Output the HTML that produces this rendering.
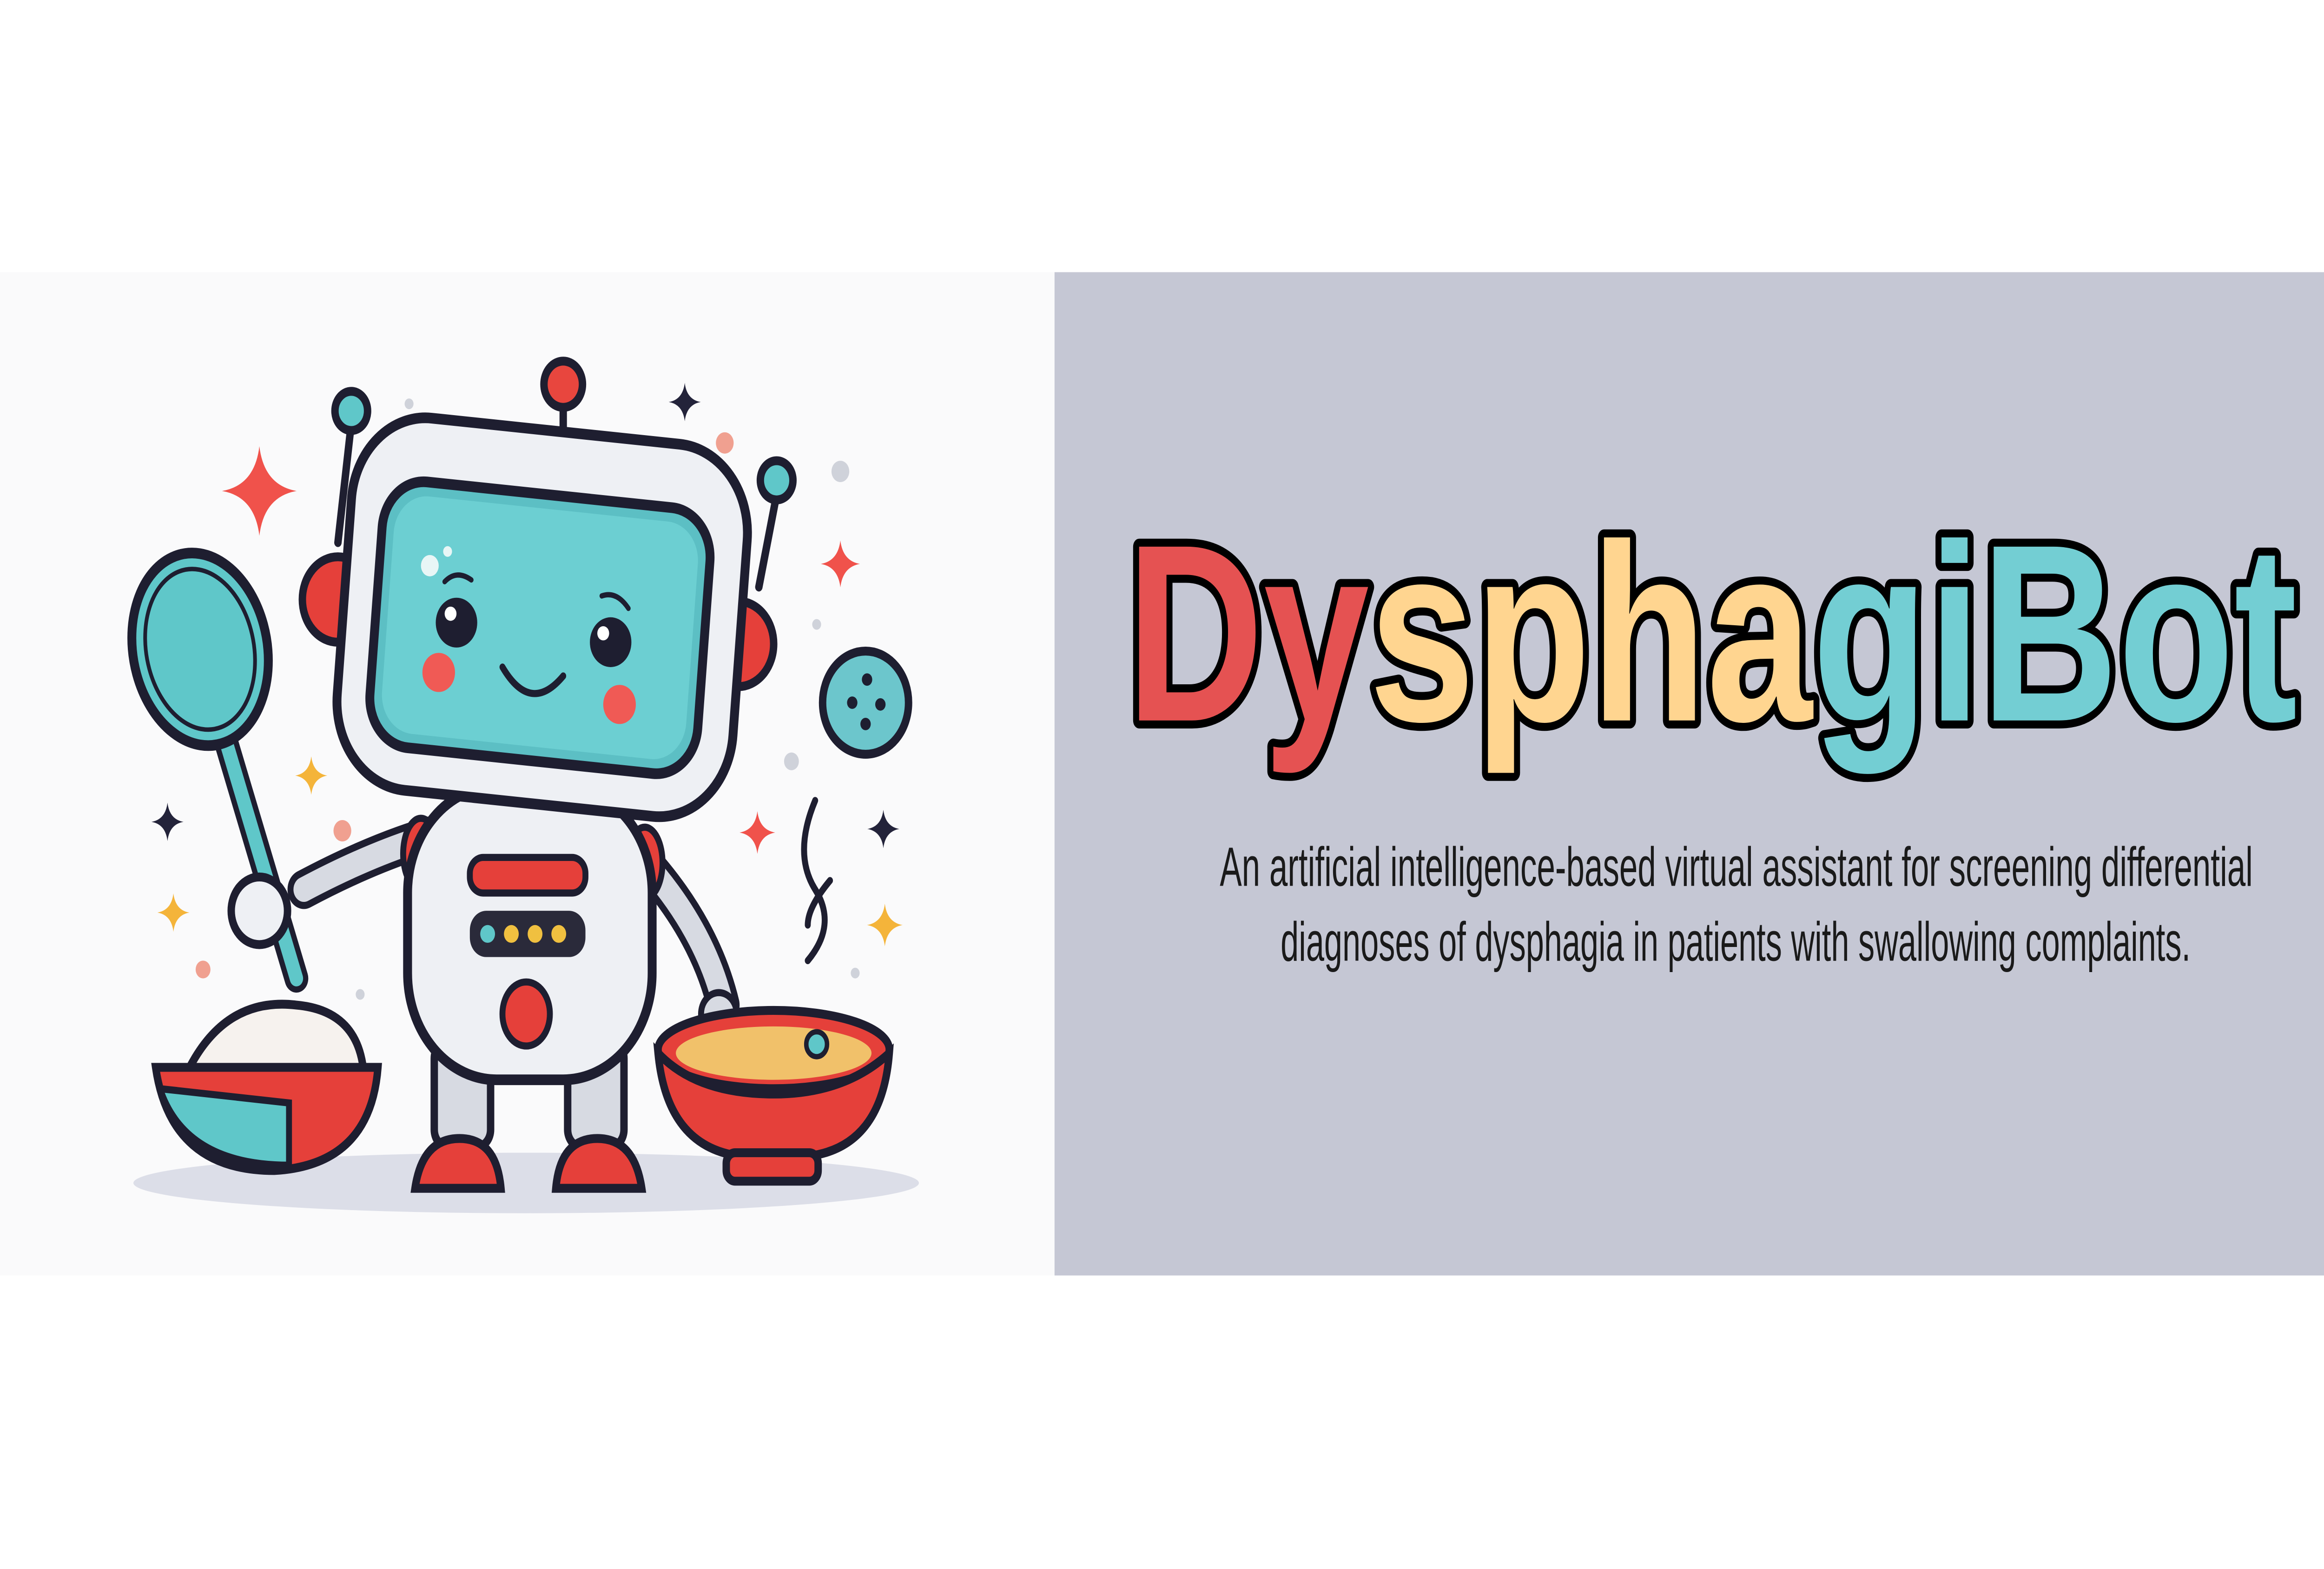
<!DOCTYPE html>
<html><head><meta charset="utf-8"><style>
html,body{margin:0;padding:0;background:#fff;overflow:hidden;}
svg{display:block;width:100vw;height:100vh;}
</style></head><body>
<svg viewBox="0 0 1568 882" preserveAspectRatio="none" xmlns="http://www.w3.org/2000/svg">
<defs>
<g id="spk"><path d="M0,-12 Q1.5,-1.5 12,0 Q1.5,1.5 0,12 Q-1.5,1.5 -12,0 Q-1.5,-1.5 0,-12Z"/></g>
</defs>
<rect width="1568" height="882" fill="#fff"/>
<rect x="0" y="153" width="711.5" height="564" fill="#fafafb"/>
<rect x="711.5" y="153" width="857" height="564" fill="#c5c7d4"/>

<ellipse cx="355" cy="665" rx="265" ry="17" fill="#dcdee8"/>

<g fill="#f0524b">
<use href="#spk" transform="translate(175,276) scale(2.1)"/>
<use href="#spk" transform="translate(567,317) scale(1.1)"/>
<use href="#spk" transform="translate(511,468) scale(1)"/>
</g>
<g fill="#f4b43a">
<use href="#spk" transform="translate(210,436) scale(0.9)"/>
<use href="#spk" transform="translate(117,513) scale(0.9)"/>
<use href="#spk" transform="translate(597,520) scale(1)"/>
</g>
<g fill="#23233a">
<use href="#spk" transform="translate(462,226) scale(0.9)"/>
<use href="#spk" transform="translate(113,462) scale(0.9)"/>
<use href="#spk" transform="translate(596,466) scale(0.9)"/>
</g>
<g fill="#f0a090"><circle cx="489" cy="249" r="6"/><circle cx="231" cy="467" r="6"/><circle cx="137" cy="545" r="5"/></g>
<g fill="#cfd2da"><circle cx="567" cy="265" r="6"/><circle cx="276" cy="227" r="3"/><circle cx="534" cy="428" r="5"/><circle cx="551" cy="351" r="3"/><circle cx="243" cy="559" r="3"/><circle cx="577" cy="547" r="3"/></g>
<circle cx="584" cy="395" r="29" fill="#6cc6cc" stroke="#1e1e30" stroke-width="5"/>
<g fill="#1e1e30"><circle cx="585" cy="382" r="3.5"/><circle cx="575" cy="395" r="3.5"/><circle cx="594" cy="396" r="3.5"/><circle cx="584" cy="407" r="3.5"/></g>
<path d="M550,450 Q535,480 550,500 Q565,520 545,540" fill="none" stroke="#1e1e30" stroke-width="4" stroke-linecap="round"/>
<path d="M560,495 Q545,510 545,520" fill="none" stroke="#1e1e30" stroke-width="4" stroke-linecap="round"/>

<g stroke="#1e1e30" stroke-width="5" stroke-linecap="round">
<line x1="228" y1="305" x2="237" y2="238"/>
<line x1="380" y1="245" x2="380" y2="225"/>
<line x1="512" y1="330" x2="524" y2="278"/>
</g>
<circle cx="237" cy="231" r="11" fill="#5fc7c9" stroke="#1e1e30" stroke-width="5"/>
<circle cx="380" cy="216" r="13" fill="#e8463e" stroke="#1e1e30" stroke-width="5"/>
<circle cx="524" cy="270" r="11" fill="#5fc7c9" stroke="#1e1e30" stroke-width="5"/>

<circle cx="228" cy="337" r="24" fill="#e5403a" stroke="#1e1e30" stroke-width="5"/>
<circle cx="498" cy="362" r="24" fill="#e5403a" stroke="#1e1e30" stroke-width="5"/>

<path d="M290,470 Q250,480 205,500" fill="none" stroke="#1e1e30" stroke-width="22" stroke-linecap="round"/>
<path d="M290,470 Q250,480 205,500" fill="none" stroke="#d7dae2" stroke-width="14" stroke-linecap="round"/>
<path d="M430,480 Q475,520 488,565" fill="none" stroke="#1e1e30" stroke-width="22" stroke-linecap="round"/>
<path d="M430,480 Q475,520 488,565" fill="none" stroke="#d7dae2" stroke-width="14" stroke-linecap="round"/>
<ellipse cx="284" cy="480" rx="12" ry="20" fill="#e5403a" stroke="#1e1e30" stroke-width="4"/>
<ellipse cx="435" cy="485" rx="12" ry="20" fill="#e5403a" stroke="#1e1e30" stroke-width="4"/>

<rect x="293" y="585" width="38" height="60" rx="10" fill="#d7dae2" stroke="#1e1e30" stroke-width="5"/>
<rect x="383" y="585" width="38" height="60" rx="10" fill="#d7dae2" stroke="#1e1e30" stroke-width="5"/>
<path d="M280,668 Q285,640 310,640 Q335,640 338,668 Z" fill="#e5403a" stroke="#1e1e30" stroke-width="5"/>
<path d="M375,668 Q378,640 403,640 Q428,640 433,668 Z" fill="#e5403a" stroke="#1e1e30" stroke-width="5"/>

<rect x="275" y="442" width="165" height="165" rx="60" fill="#eef0f4" stroke="#1e1e30" stroke-width="6"/>
<rect x="317" y="482" width="78" height="20" rx="9" fill="#e5403a" stroke="#1e1e30" stroke-width="4"/>
<rect x="317" y="512" width="78" height="26" rx="11" fill="#2a2a3a"/>
<circle cx="329" cy="525" r="5" fill="#5fc7c9"/><circle cx="345" cy="525" r="5" fill="#f0c040"/><circle cx="361" cy="525" r="5" fill="#f0c040"/><circle cx="377" cy="525" r="5" fill="#f0c040"/>
<ellipse cx="355" cy="570" rx="16" ry="18" fill="#e5403a" stroke="#1e1e30" stroke-width="4"/>

<g transform="rotate(5 366 345)">
<rect x="232" y="242" width="268" height="210" rx="50" fill="#eef0f4" stroke="#1e1e30" stroke-width="6"/>
<rect x="254" y="278" width="222" height="150" rx="28" fill="#5cbfc4" stroke="#1e1e30" stroke-width="6"/>
<rect x="262" y="286" width="206" height="134" rx="22" fill="#6ccfd2"/>
</g>
<circle cx="308" cy="350" r="14" fill="#1e1e30"/><circle cx="304" cy="345" r="4" fill="#fff"/>
<circle cx="412" cy="361" r="14" fill="#1e1e30"/><circle cx="407" cy="356" r="4" fill="#fff"/>
<circle cx="290" cy="318" r="6" fill="#e8f6f6"/><circle cx="302" cy="310" r="3" fill="#e8f6f6"/>
<path d="M300,327 Q308,320 318,326" fill="none" stroke="#1e1e30" stroke-width="3" stroke-linecap="round"/>
<path d="M406,335 Q416,332 424,342" fill="none" stroke="#1e1e30" stroke-width="3" stroke-linecap="round"/>
<circle cx="296" cy="378" r="11" fill="#f05a55"/>
<circle cx="418" cy="396" r="11" fill="#f05a55"/>
<path d="M339,375 Q358,402 380,380" fill="none" stroke="#1e1e30" stroke-width="4" stroke-linecap="round"/>

<path d="M150,410 L200,550" stroke="#1e1e30" stroke-width="16" stroke-linecap="round"/>
<path d="M150,410 L200,550" stroke="#5fc7c9" stroke-width="9" stroke-linecap="round"/>
<ellipse cx="135" cy="365" rx="45" ry="55" transform="rotate(-18 135 365)" fill="#5fc7c9" stroke="#1e1e30" stroke-width="6"/>
<ellipse cx="135" cy="365" rx="36" ry="46" transform="rotate(-18 135 365)" fill="none" stroke="#1e1e30" stroke-width="2.5"/>
<circle cx="175" cy="512" r="19" fill="#eef0f4" stroke="#1e1e30" stroke-width="5"/>
<circle cx="485" cy="570" r="12" fill="#d7dae2" stroke="#1e1e30" stroke-width="4"/>

<path d="M125,605 Q150,560 200,565 Q240,568 245,600 Z" fill="#f6f2ee" stroke="#1e1e30" stroke-width="5"/>
<path d="M105,600 L255,600 Q250,655 185,658 Q115,658 105,600Z" fill="#e5403a" stroke="#1e1e30" stroke-width="5"/>
<path d="M108,612 L195,620 L195,655 Q125,655 108,612Z" fill="#5fc7c9" stroke="#1e1e30" stroke-width="4"/>

<ellipse cx="522" cy="590" rx="78" ry="22" fill="#e5403a" stroke="#1e1e30" stroke-width="5"/>
<ellipse cx="522" cy="592" rx="66" ry="15" fill="#f1c16a"/>
<path d="M444,592 Q450,645 500,650 L545,650 Q595,645 600,592 Q570,615 522,615 Q470,615 444,592Z" fill="#e5403a" stroke="#1e1e30" stroke-width="5"/>
<rect x="490" y="648" width="62" height="16" rx="6" fill="#e5403a" stroke="#1e1e30" stroke-width="5"/>
<circle cx="551" cy="587" r="7" fill="#5fc7c9" stroke="#1e1e30" stroke-width="3"/>

<g font-family="'Liberation Sans', 'DejaVu Sans', sans-serif" font-weight="bold" font-size="142" stroke="#000" stroke-width="9" stroke-linejoin="round" paint-order="stroke">
<text x="760" y="405" textLength="790" lengthAdjust="spacingAndGlyphs"><tspan fill="#e55252">Dy</tspan><tspan fill="#ffd590">spha</tspan><tspan fill="#73ced3">giBot</tspan></text>
</g>
<g font-family="'Liberation Sans Narrow', 'Liberation Sans', sans-serif" font-size="31" fill="#1a1a1a">
<text x="823" y="498" textLength="697" lengthAdjust="spacingAndGlyphs">An artificial intelligence-based virtual assistant for screening differential</text>
<text x="864" y="540" textLength="614" lengthAdjust="spacingAndGlyphs">diagnoses of dysphagia in patients with swallowing complaints.</text>
</g>
</svg>
</body></html>
